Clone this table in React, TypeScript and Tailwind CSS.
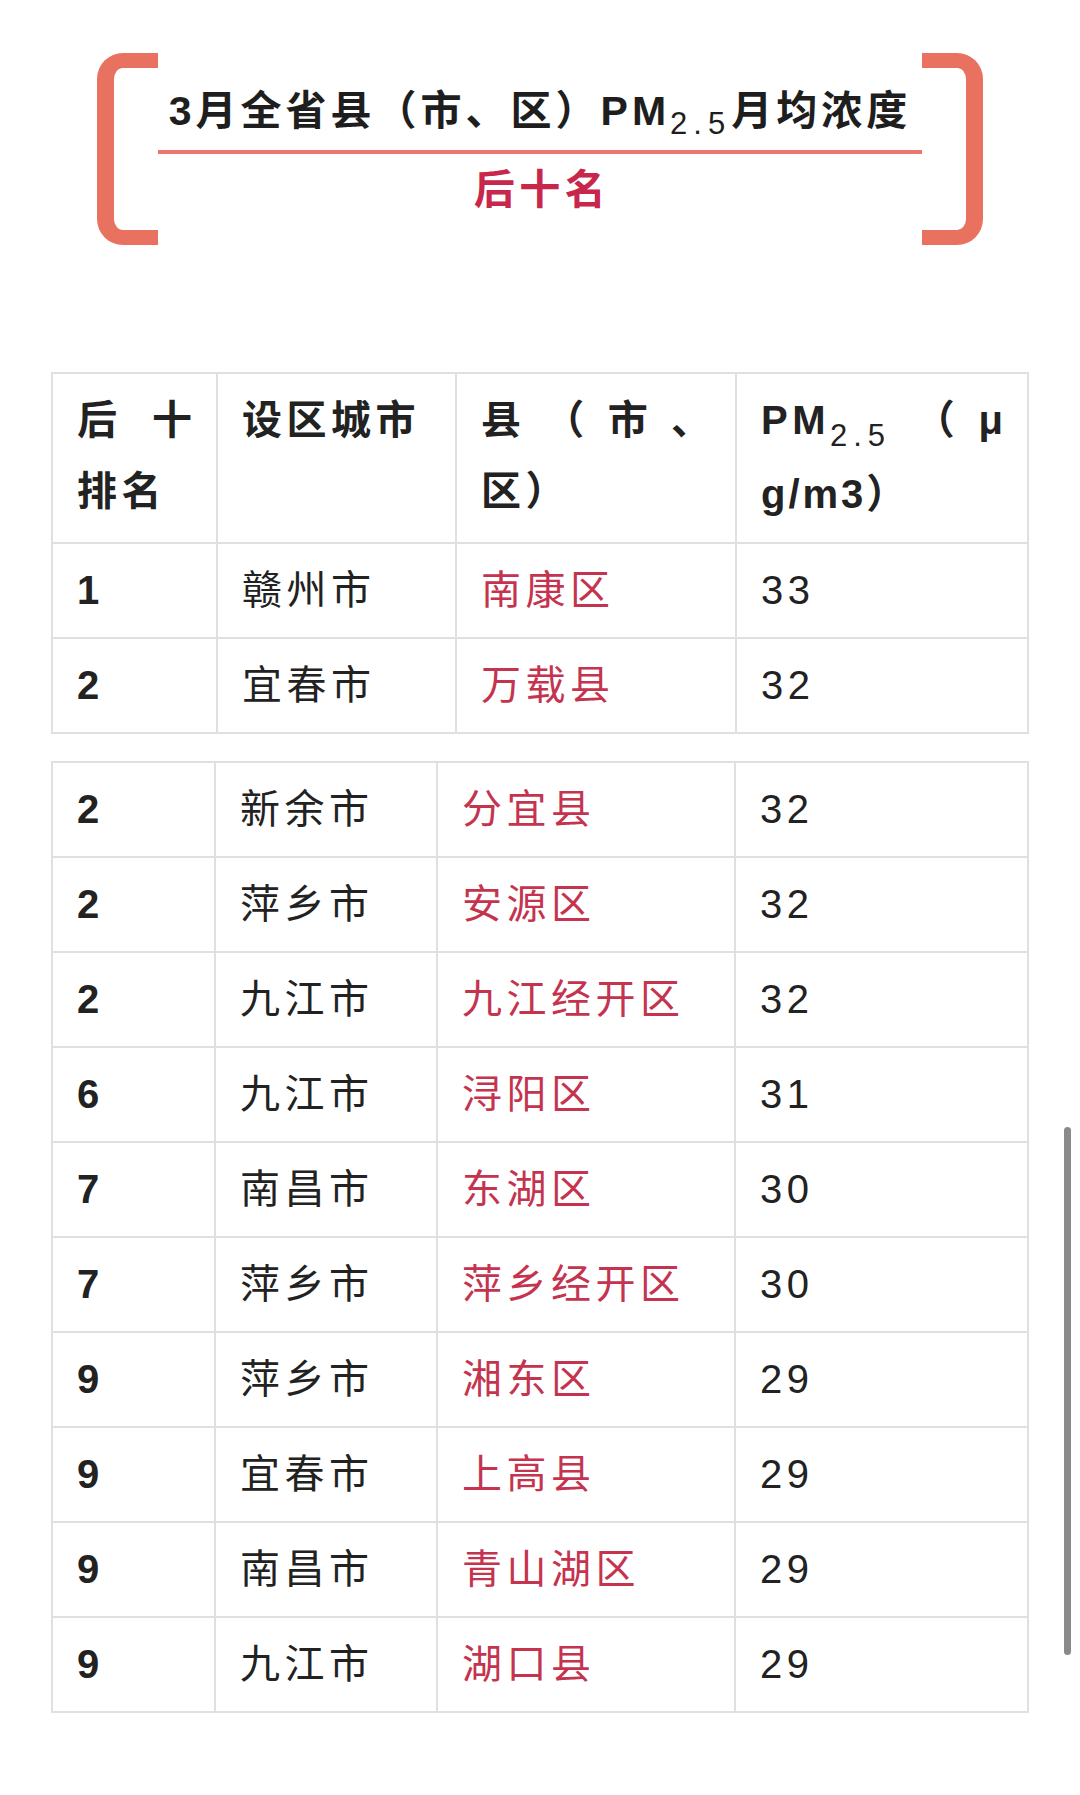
import React from "react";

type Row = [string, string, string, string];

const table1: Row[] = [
  ["1", "赣州市", "南康区", "33"],
  ["2", "宜春市", "万载县", "32"],
];

const table2: Row[] = [
  ["2", "新余市", "分宜县", "32"],
  ["2", "萍乡市", "安源区", "32"],
  ["2", "九江市", "九江经开区", "32"],
  ["6", "九江市", "浔阳区", "31"],
  ["7", "南昌市", "东湖区", "30"],
  ["7", "萍乡市", "萍乡经开区", "30"],
  ["9", "萍乡市", "湘东区", "29"],
  ["9", "宜春市", "上高县", "29"],
  ["9", "南昌市", "青山湖区", "29"],
  ["9", "九江市", "湖口县", "29"],
];

const cell =
  "border-2 border-[#e0e0e0] px-[24px] py-[11px] leading-[71px] align-middle text-left";

function DataRows({ rows }: { rows: Row[] }) {
  return (
    <>
      {rows.map((r, i) => (
        <tr key={i}>
          <td className={`${cell} font-bold text-[#222222]`}>{r[0]}</td>
          <td className={`${cell} text-[#222222]`}>{r[1]}</td>
          <td className={`${cell} text-[#c4344f]`}>{r[2]}</td>
          <td className={`${cell} text-[#222222]`}>{r[3]}</td>
        </tr>
      ))}
    </>
  );
}

const headCell =
  "border-2 border-[#e0e0e0] px-[24px] pt-[11px] pb-[12px] leading-[71px] align-top text-left font-bold text-[#222222]";

export default function App() {
  return (
    <div className="relative w-[1080px] h-[1795px] overflow-hidden bg-white font-['Liberation_Sans','Noto_Sans_CJK_SC',sans-serif] tracking-[4.5px] text-[40px]">
      {/* Title block */}
      <div className="flex justify-center pt-[53px]">
        <div className="w-[61px] h-[192px] border-l-[17px] border-y-[15px] border-r-0 border-[#e87160] rounded-l-[26px]" />
        <div className="w-[764px] h-[192px] flex flex-col items-center pt-[33px]">
          <div className="h-[50px] leading-[50px] text-[41px] font-bold text-[#1e1e1e] whitespace-nowrap tracking-[4px]">
            3月全省县（市、区）PM
            <span className="relative top-[9px] text-[31px] font-normal tracking-[6px]">2.5</span>
            月均浓度
          </div>
          <div className="mt-[14px] h-[4px] w-full bg-[#e8766a]" />
          <div className="mt-[11px] h-[50px] leading-[50px] text-[41px] font-bold text-[#c8264a] pl-[4px]">
            后十名
          </div>
        </div>
        <div className="w-[61px] h-[192px] border-r-[17px] border-y-[15px] border-l-0 border-[#e87160] rounded-r-[26px]" />
      </div>

      {/* Tables */}
      <div className="pl-[51px] pr-[53px] mt-[127px]">
        <table className="w-full table-fixed border-collapse">
          <colgroup>
            <col className="w-[165px]" />
            <col className="w-[239px]" />
            <col className="w-[280px]" />
            <col className="w-[292px]" />
          </colgroup>
          <thead>
            <tr>
              <th className={headCell}>
                <div className="flex justify-between tracking-normal">
                  <span>后</span>
                  <span>十</span>
                </div>
                <div>排名</div>
              </th>
              <th className={headCell}>
                <div>设区城市</div>
              </th>
              <th className={headCell}>
                <div className="flex justify-between tracking-normal">
                  <span>县</span>
                  <span>（</span>
                  <span>市</span>
                  <span>、</span>
                </div>
                <div>区）</div>
              </th>
              <th className={headCell}>
                <div className="flex justify-between tracking-normal">
                  <span className="tracking-[4.5px] whitespace-nowrap">
                    PM
                    <span className="relative top-[12px] text-[31px] font-normal tracking-[6px]">2.5</span>
                  </span>
                  <span>（</span>
                  <span>μ</span>
                </div>
                <div className="tracking-[3px]">g/m3）</div>
              </th>
            </tr>
          </thead>
          <tbody>
            <DataRows rows={table1} />
          </tbody>
        </table>

        <table className="mt-[27px] w-full table-fixed border-collapse">
          <colgroup>
            <col className="w-[163px]" />
            <col className="w-[222px]" />
            <col className="w-[298px]" />
            <col className="w-[293px]" />
          </colgroup>
          <tbody>
            <DataRows rows={table2} />
          </tbody>
        </table>
      </div>

      {/* Scrollbar overlay */}
      <div className="absolute left-[1064px] top-[1127px] w-[7px] h-[528px] rounded-full bg-[#8a8a8a]" />
    </div>
  );
}
